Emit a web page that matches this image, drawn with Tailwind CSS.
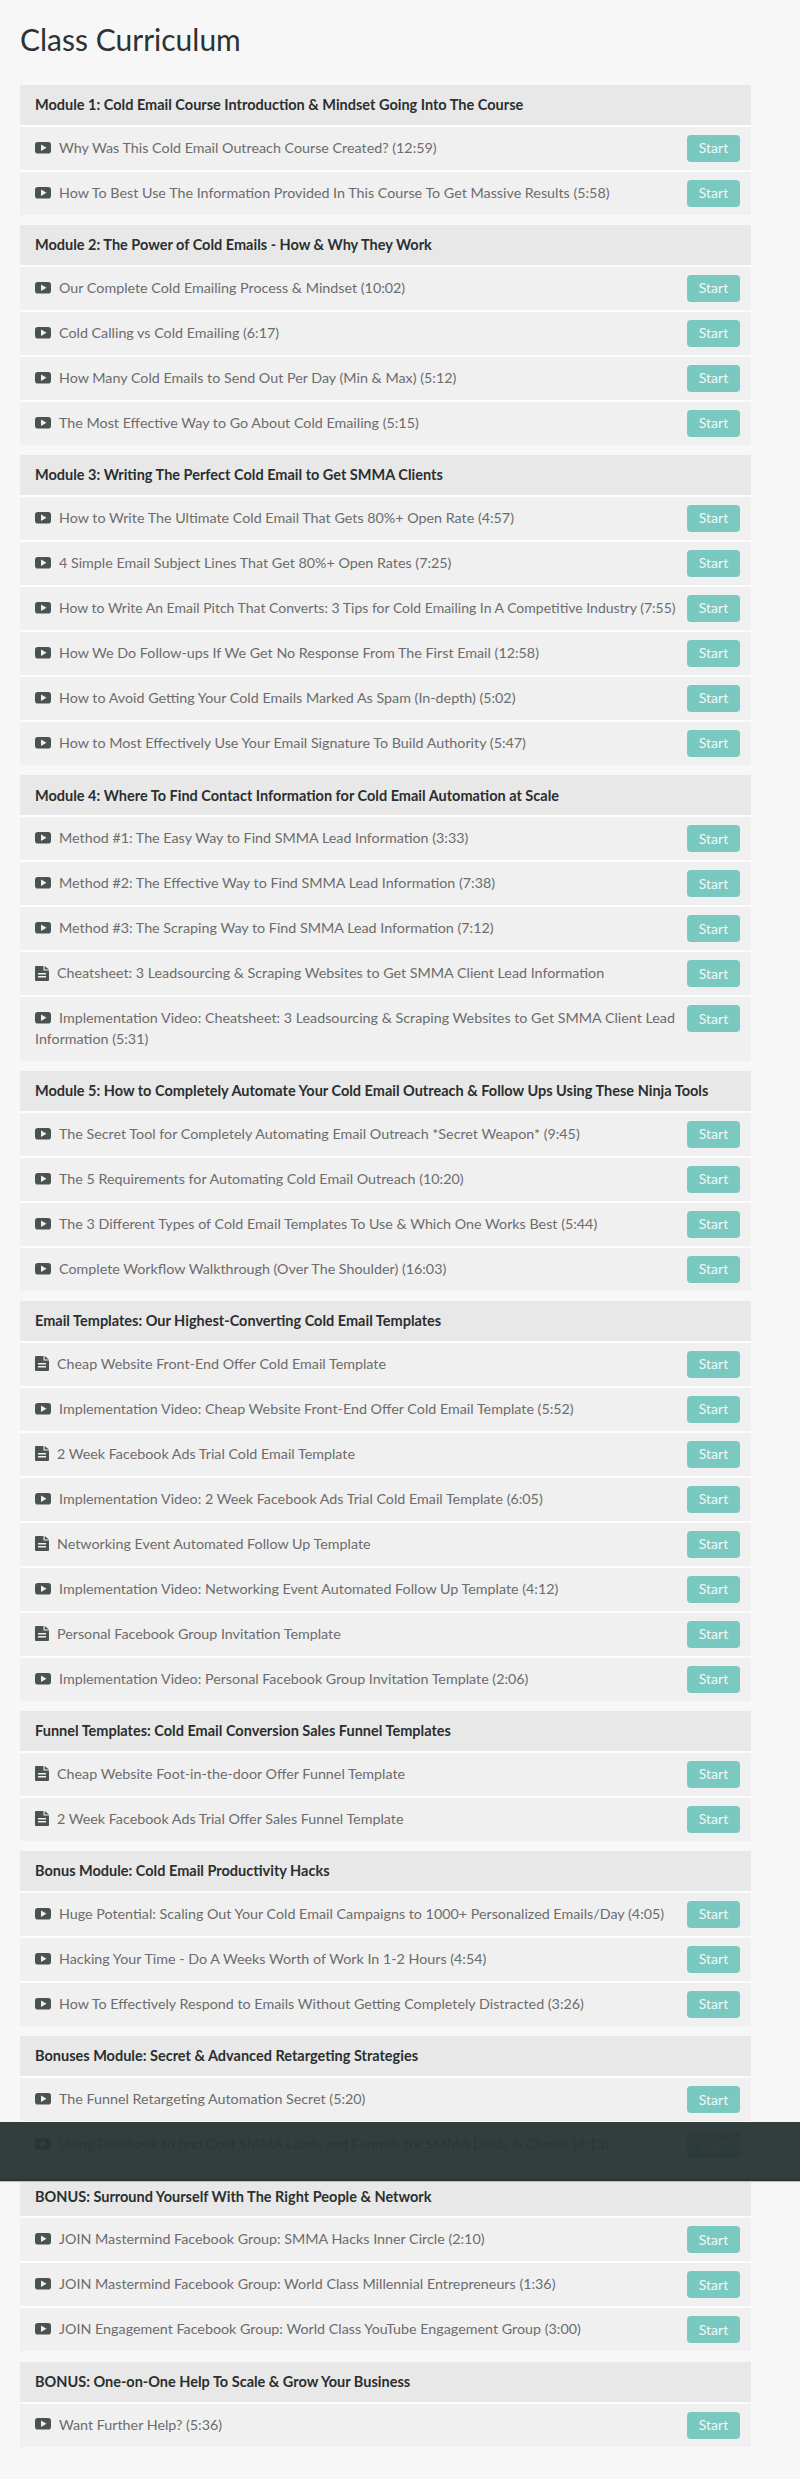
<!doctype html>
<html lang="en">
<head>
<meta charset="utf-8">
<title>Class Curriculum</title>
<script src="https://cdn.jsdelivr.net/npm/@tailwindcss/browser@4"></script>
</head>
<body class="relative h-[2479px] overflow-hidden bg-[#f7f7f7] font-['Lato',sans-serif] text-[#6c6c6c]">
<svg class="hidden">
  <symbol id="v" viewBox="0 0 16 12"><rect width="16" height="11.5" rx="2.8" fill="#4a5352"/><path d="M6 2.6 11.5 5.8 6 9Z" fill="#f0f0f0"/></symbol>
  <symbol id="d" viewBox="0 0 14 15"><path d="M0 1a1 1 0 0 1 1-1h7.5v4.5H14V14a1 1 0 0 1-1 1H1a1 1 0 0 1-1-1Z" fill="#4a5352"/><path d="M9.7 0 14 3.5H9.7Z" fill="#4a5352"/><path d="M3 7h8v1.4H3ZM3 10h8v1.4H3Z" fill="#f0f0f0"/></symbol>
</svg>
<main class="pt-[21px] pl-5 w-[751px]">
<h1 class="text-[30px] leading-[36px] font-normal text-[#2c3333] mb-[28px]">Class Curriculum</h1>

<section class="mb-[10.15px] bg-[#fcfcfc]">
<h2 class="h-[40px] mb-[2px] bg-[#e8e8e8] pl-[15px] flex items-center text-[14.5px] font-bold text-[#2b2f2f]">Module 1: Cold Email Course Introduction &amp; Mindset Going Into The Course</h2>
<div class="flex justify-between items-start mb-[2px] bg-[#f0f0f0] pl-[15px] pr-[11px] py-[11px] text-[14.3px] leading-[20.6px]"><p><svg class="inline w-4 h-3 mr-2 -mt-[3px]"><use href="#v"/></svg>Why Was This Cold Email Outreach Course Created? (12:59)</p><a class="shrink-0 -my-[3px] flex w-[53px] h-[27px] items-center justify-center rounded-[4px] bg-[#7ac9c0] text-[14px] text-[#f2f8f7]">Start</a></div>
<div class="flex justify-between items-start mb-[2px] bg-[#f0f0f0] pl-[15px] pr-[11px] py-[11px] text-[14.3px] leading-[20.6px]"><p><svg class="inline w-4 h-3 mr-2 -mt-[3px]"><use href="#v"/></svg>How To Best Use The Information Provided In This Course To Get Massive Results (5:58)</p><a class="shrink-0 -my-[3px] flex w-[53px] h-[27px] items-center justify-center rounded-[4px] bg-[#7ac9c0] text-[14px] text-[#f2f8f7]">Start</a></div>
</section>

<section class="mb-[10.15px] bg-[#fcfcfc]">
<h2 class="h-[40px] mb-[2px] bg-[#e8e8e8] pl-[15px] flex items-center text-[14.5px] font-bold text-[#2b2f2f]">Module 2: The Power of Cold Emails - How &amp; Why They Work</h2>
<div class="flex justify-between items-start mb-[2px] bg-[#f0f0f0] pl-[15px] pr-[11px] py-[11px] text-[14.3px] leading-[20.6px]"><p><svg class="inline w-4 h-3 mr-2 -mt-[3px]"><use href="#v"/></svg>Our Complete Cold Emailing Process &amp; Mindset (10:02)</p><a class="shrink-0 -my-[3px] flex w-[53px] h-[27px] items-center justify-center rounded-[4px] bg-[#7ac9c0] text-[14px] text-[#f2f8f7]">Start</a></div>
<div class="flex justify-between items-start mb-[2px] bg-[#f0f0f0] pl-[15px] pr-[11px] py-[11px] text-[14.3px] leading-[20.6px]"><p><svg class="inline w-4 h-3 mr-2 -mt-[3px]"><use href="#v"/></svg>Cold Calling vs Cold Emailing (6:17)</p><a class="shrink-0 -my-[3px] flex w-[53px] h-[27px] items-center justify-center rounded-[4px] bg-[#7ac9c0] text-[14px] text-[#f2f8f7]">Start</a></div>
<div class="flex justify-between items-start mb-[2px] bg-[#f0f0f0] pl-[15px] pr-[11px] py-[11px] text-[14.3px] leading-[20.6px]"><p><svg class="inline w-4 h-3 mr-2 -mt-[3px]"><use href="#v"/></svg>How Many Cold Emails to Send Out Per Day (Min &amp; Max) (5:12)</p><a class="shrink-0 -my-[3px] flex w-[53px] h-[27px] items-center justify-center rounded-[4px] bg-[#7ac9c0] text-[14px] text-[#f2f8f7]">Start</a></div>
<div class="flex justify-between items-start mb-[2px] bg-[#f0f0f0] pl-[15px] pr-[11px] py-[11px] text-[14.3px] leading-[20.6px]"><p><svg class="inline w-4 h-3 mr-2 -mt-[3px]"><use href="#v"/></svg>The Most Effective Way to Go About Cold Emailing (5:15)</p><a class="shrink-0 -my-[3px] flex w-[53px] h-[27px] items-center justify-center rounded-[4px] bg-[#7ac9c0] text-[14px] text-[#f2f8f7]">Start</a></div>
</section>

<section class="mb-[10.15px] bg-[#fcfcfc]">
<h2 class="h-[40px] mb-[2px] bg-[#e8e8e8] pl-[15px] flex items-center text-[14.5px] font-bold text-[#2b2f2f]">Module 3: Writing The Perfect Cold Email to Get SMMA Clients</h2>
<div class="flex justify-between items-start mb-[2px] bg-[#f0f0f0] pl-[15px] pr-[11px] py-[11px] text-[14.3px] leading-[20.6px]"><p><svg class="inline w-4 h-3 mr-2 -mt-[3px]"><use href="#v"/></svg>How to Write The Ultimate Cold Email That Gets 80%+ Open Rate (4:57)</p><a class="shrink-0 -my-[3px] flex w-[53px] h-[27px] items-center justify-center rounded-[4px] bg-[#7ac9c0] text-[14px] text-[#f2f8f7]">Start</a></div>
<div class="flex justify-between items-start mb-[2px] bg-[#f0f0f0] pl-[15px] pr-[11px] py-[11px] text-[14.3px] leading-[20.6px]"><p><svg class="inline w-4 h-3 mr-2 -mt-[3px]"><use href="#v"/></svg>4 Simple Email Subject Lines That Get 80%+ Open Rates (7:25)</p><a class="shrink-0 -my-[3px] flex w-[53px] h-[27px] items-center justify-center rounded-[4px] bg-[#7ac9c0] text-[14px] text-[#f2f8f7]">Start</a></div>
<div class="flex justify-between items-start mb-[2px] bg-[#f0f0f0] pl-[15px] pr-[11px] py-[11px] text-[14px] leading-[20.6px]"><p class="whitespace-nowrap"><svg class="inline w-4 h-3 mr-2 -mt-[3px]"><use href="#v"/></svg>How to Write An Email Pitch That Converts: 3 Tips for Cold Emailing In A Competitive Industry (7:55)</p><a class="shrink-0 -my-[3px] flex w-[53px] h-[27px] items-center justify-center rounded-[4px] bg-[#7ac9c0] text-[14px] text-[#f2f8f7]">Start</a></div>
<div class="flex justify-between items-start mb-[2px] bg-[#f0f0f0] pl-[15px] pr-[11px] py-[11px] text-[14.3px] leading-[20.6px]"><p><svg class="inline w-4 h-3 mr-2 -mt-[3px]"><use href="#v"/></svg>How We Do Follow-ups If We Get No Response From The First Email (12:58)</p><a class="shrink-0 -my-[3px] flex w-[53px] h-[27px] items-center justify-center rounded-[4px] bg-[#7ac9c0] text-[14px] text-[#f2f8f7]">Start</a></div>
<div class="flex justify-between items-start mb-[2px] bg-[#f0f0f0] pl-[15px] pr-[11px] py-[11px] text-[14.3px] leading-[20.6px]"><p><svg class="inline w-4 h-3 mr-2 -mt-[3px]"><use href="#v"/></svg>How to Avoid Getting Your Cold Emails Marked As Spam (In-depth) (5:02)</p><a class="shrink-0 -my-[3px] flex w-[53px] h-[27px] items-center justify-center rounded-[4px] bg-[#7ac9c0] text-[14px] text-[#f2f8f7]">Start</a></div>
<div class="flex justify-between items-start mb-[2px] bg-[#f0f0f0] pl-[15px] pr-[11px] py-[11px] text-[14.3px] leading-[20.6px]"><p><svg class="inline w-4 h-3 mr-2 -mt-[3px]"><use href="#v"/></svg>How to Most Effectively Use Your Email Signature To Build Authority (5:47)</p><a class="shrink-0 -my-[3px] flex w-[53px] h-[27px] items-center justify-center rounded-[4px] bg-[#7ac9c0] text-[14px] text-[#f2f8f7]">Start</a></div>
</section>

<section class="mb-[10.15px] bg-[#fcfcfc]">
<h2 class="h-[40px] mb-[2px] bg-[#e8e8e8] pl-[15px] flex items-center text-[14.5px] font-bold text-[#2b2f2f]">Module 4: Where To Find Contact Information for Cold Email Automation at Scale</h2>
<div class="flex justify-between items-start mb-[2px] bg-[#f0f0f0] pl-[15px] pr-[11px] py-[11px] text-[14.3px] leading-[20.6px]"><p><svg class="inline w-4 h-3 mr-2 -mt-[3px]"><use href="#v"/></svg>Method #1: The Easy Way to Find SMMA Lead Information (3:33)</p><a class="shrink-0 -my-[3px] flex w-[53px] h-[27px] items-center justify-center rounded-[4px] bg-[#7ac9c0] text-[14px] text-[#f2f8f7]">Start</a></div>
<div class="flex justify-between items-start mb-[2px] bg-[#f0f0f0] pl-[15px] pr-[11px] py-[11px] text-[14.3px] leading-[20.6px]"><p><svg class="inline w-4 h-3 mr-2 -mt-[3px]"><use href="#v"/></svg>Method #2: The Effective Way to Find SMMA Lead Information (7:38)</p><a class="shrink-0 -my-[3px] flex w-[53px] h-[27px] items-center justify-center rounded-[4px] bg-[#7ac9c0] text-[14px] text-[#f2f8f7]">Start</a></div>
<div class="flex justify-between items-start mb-[2px] bg-[#f0f0f0] pl-[15px] pr-[11px] py-[11px] text-[14.3px] leading-[20.6px]"><p><svg class="inline w-4 h-3 mr-2 -mt-[3px]"><use href="#v"/></svg>Method #3: The Scraping Way to Find SMMA Lead Information (7:12)</p><a class="shrink-0 -my-[3px] flex w-[53px] h-[27px] items-center justify-center rounded-[4px] bg-[#7ac9c0] text-[14px] text-[#f2f8f7]">Start</a></div>
<div class="flex justify-between items-start mb-[2px] bg-[#f0f0f0] pl-[15px] pr-[11px] py-[11px] text-[14.3px] leading-[20.6px]"><p><svg class="inline w-[14px] h-[15px] mr-2 -mt-[3px]"><use href="#d"/></svg>Cheatsheet: 3 Leadsourcing &amp; Scraping Websites to Get SMMA Client Lead Information</p><a class="shrink-0 -my-[3px] flex w-[53px] h-[27px] items-center justify-center rounded-[4px] bg-[#7ac9c0] text-[14px] text-[#f2f8f7]">Start</a></div>
<div class="flex justify-between items-start mb-[2px] bg-[#f0f0f0] pl-[15px] pr-[11px] py-[11px] text-[14.3px] leading-[20.6px]"><p><svg class="inline w-4 h-3 mr-2 -mt-[3px]"><use href="#v"/></svg>Implementation Video: Cheatsheet: 3 Leadsourcing &amp; Scraping Websites to Get SMMA Client Lead Information (5:31)</p><a class="shrink-0 -my-[3px] flex w-[53px] h-[27px] items-center justify-center rounded-[4px] bg-[#7ac9c0] text-[14px] text-[#f2f8f7]">Start</a></div>
</section>

<section class="mb-[10.15px] bg-[#fcfcfc]">
<h2 class="h-[40px] mb-[2px] bg-[#e8e8e8] pl-[15px] flex items-center text-[14.5px] font-bold text-[#2b2f2f]">Module 5: How to Completely Automate Your Cold Email Outreach &amp; Follow Ups Using These Ninja Tools</h2>
<div class="flex justify-between items-start mb-[2px] bg-[#f0f0f0] pl-[15px] pr-[11px] py-[11px] text-[14.3px] leading-[20.6px]"><p><svg class="inline w-4 h-3 mr-2 -mt-[3px]"><use href="#v"/></svg>The Secret Tool for Completely Automating Email Outreach *Secret Weapon* (9:45)</p><a class="shrink-0 -my-[3px] flex w-[53px] h-[27px] items-center justify-center rounded-[4px] bg-[#7ac9c0] text-[14px] text-[#f2f8f7]">Start</a></div>
<div class="flex justify-between items-start mb-[2px] bg-[#f0f0f0] pl-[15px] pr-[11px] py-[11px] text-[14.3px] leading-[20.6px]"><p><svg class="inline w-4 h-3 mr-2 -mt-[3px]"><use href="#v"/></svg>The 5 Requirements for Automating Cold Email Outreach (10:20)</p><a class="shrink-0 -my-[3px] flex w-[53px] h-[27px] items-center justify-center rounded-[4px] bg-[#7ac9c0] text-[14px] text-[#f2f8f7]">Start</a></div>
<div class="flex justify-between items-start mb-[2px] bg-[#f0f0f0] pl-[15px] pr-[11px] py-[11px] text-[14.3px] leading-[20.6px]"><p><svg class="inline w-4 h-3 mr-2 -mt-[3px]"><use href="#v"/></svg>The 3 Different Types of Cold Email Templates To Use &amp; Which One Works Best (5:44)</p><a class="shrink-0 -my-[3px] flex w-[53px] h-[27px] items-center justify-center rounded-[4px] bg-[#7ac9c0] text-[14px] text-[#f2f8f7]">Start</a></div>
<div class="flex justify-between items-start mb-[2px] bg-[#f0f0f0] pl-[15px] pr-[11px] py-[11px] text-[14.3px] leading-[20.6px]"><p><svg class="inline w-4 h-3 mr-2 -mt-[3px]"><use href="#v"/></svg>Complete Workflow Walkthrough (Over The Shoulder) (16:03)</p><a class="shrink-0 -my-[3px] flex w-[53px] h-[27px] items-center justify-center rounded-[4px] bg-[#7ac9c0] text-[14px] text-[#f2f8f7]">Start</a></div>
</section>

<section class="mb-[10.15px] bg-[#fcfcfc]">
<h2 class="h-[40px] mb-[2px] bg-[#e8e8e8] pl-[15px] flex items-center text-[14.5px] font-bold text-[#2b2f2f]">Email Templates: Our Highest-Converting Cold Email Templates</h2>
<div class="flex justify-between items-start mb-[2px] bg-[#f0f0f0] pl-[15px] pr-[11px] py-[11px] text-[14.3px] leading-[20.6px]"><p><svg class="inline w-[14px] h-[15px] mr-2 -mt-[3px]"><use href="#d"/></svg>Cheap Website Front-End Offer Cold Email Template</p><a class="shrink-0 -my-[3px] flex w-[53px] h-[27px] items-center justify-center rounded-[4px] bg-[#7ac9c0] text-[14px] text-[#f2f8f7]">Start</a></div>
<div class="flex justify-between items-start mb-[2px] bg-[#f0f0f0] pl-[15px] pr-[11px] py-[11px] text-[14.3px] leading-[20.6px]"><p><svg class="inline w-4 h-3 mr-2 -mt-[3px]"><use href="#v"/></svg>Implementation Video: Cheap Website Front-End Offer Cold Email Template (5:52)</p><a class="shrink-0 -my-[3px] flex w-[53px] h-[27px] items-center justify-center rounded-[4px] bg-[#7ac9c0] text-[14px] text-[#f2f8f7]">Start</a></div>
<div class="flex justify-between items-start mb-[2px] bg-[#f0f0f0] pl-[15px] pr-[11px] py-[11px] text-[14.3px] leading-[20.6px]"><p><svg class="inline w-[14px] h-[15px] mr-2 -mt-[3px]"><use href="#d"/></svg>2 Week Facebook Ads Trial Cold Email Template</p><a class="shrink-0 -my-[3px] flex w-[53px] h-[27px] items-center justify-center rounded-[4px] bg-[#7ac9c0] text-[14px] text-[#f2f8f7]">Start</a></div>
<div class="flex justify-between items-start mb-[2px] bg-[#f0f0f0] pl-[15px] pr-[11px] py-[11px] text-[14.3px] leading-[20.6px]"><p><svg class="inline w-4 h-3 mr-2 -mt-[3px]"><use href="#v"/></svg>Implementation Video: 2 Week Facebook Ads Trial Cold Email Template (6:05)</p><a class="shrink-0 -my-[3px] flex w-[53px] h-[27px] items-center justify-center rounded-[4px] bg-[#7ac9c0] text-[14px] text-[#f2f8f7]">Start</a></div>
<div class="flex justify-between items-start mb-[2px] bg-[#f0f0f0] pl-[15px] pr-[11px] py-[11px] text-[14.3px] leading-[20.6px]"><p><svg class="inline w-[14px] h-[15px] mr-2 -mt-[3px]"><use href="#d"/></svg>Networking Event Automated Follow Up Template</p><a class="shrink-0 -my-[3px] flex w-[53px] h-[27px] items-center justify-center rounded-[4px] bg-[#7ac9c0] text-[14px] text-[#f2f8f7]">Start</a></div>
<div class="flex justify-between items-start mb-[2px] bg-[#f0f0f0] pl-[15px] pr-[11px] py-[11px] text-[14.3px] leading-[20.6px]"><p><svg class="inline w-4 h-3 mr-2 -mt-[3px]"><use href="#v"/></svg>Implementation Video: Networking Event Automated Follow Up Template (4:12)</p><a class="shrink-0 -my-[3px] flex w-[53px] h-[27px] items-center justify-center rounded-[4px] bg-[#7ac9c0] text-[14px] text-[#f2f8f7]">Start</a></div>
<div class="flex justify-between items-start mb-[2px] bg-[#f0f0f0] pl-[15px] pr-[11px] py-[11px] text-[14.3px] leading-[20.6px]"><p><svg class="inline w-[14px] h-[15px] mr-2 -mt-[3px]"><use href="#d"/></svg>Personal Facebook Group Invitation Template</p><a class="shrink-0 -my-[3px] flex w-[53px] h-[27px] items-center justify-center rounded-[4px] bg-[#7ac9c0] text-[14px] text-[#f2f8f7]">Start</a></div>
<div class="flex justify-between items-start mb-[2px] bg-[#f0f0f0] pl-[15px] pr-[11px] py-[11px] text-[14.3px] leading-[20.6px]"><p><svg class="inline w-4 h-3 mr-2 -mt-[3px]"><use href="#v"/></svg>Implementation Video: Personal Facebook Group Invitation Template (2:06)</p><a class="shrink-0 -my-[3px] flex w-[53px] h-[27px] items-center justify-center rounded-[4px] bg-[#7ac9c0] text-[14px] text-[#f2f8f7]">Start</a></div>
</section>

<section class="mb-[10.15px] bg-[#fcfcfc]">
<h2 class="h-[40px] mb-[2px] bg-[#e8e8e8] pl-[15px] flex items-center text-[14.5px] font-bold text-[#2b2f2f]">Funnel Templates: Cold Email Conversion Sales Funnel Templates</h2>
<div class="flex justify-between items-start mb-[2px] bg-[#f0f0f0] pl-[15px] pr-[11px] py-[11px] text-[14.3px] leading-[20.6px]"><p><svg class="inline w-[14px] h-[15px] mr-2 -mt-[3px]"><use href="#d"/></svg>Cheap Website Foot-in-the-door Offer Funnel Template</p><a class="shrink-0 -my-[3px] flex w-[53px] h-[27px] items-center justify-center rounded-[4px] bg-[#7ac9c0] text-[14px] text-[#f2f8f7]">Start</a></div>
<div class="flex justify-between items-start mb-[2px] bg-[#f0f0f0] pl-[15px] pr-[11px] py-[11px] text-[14.3px] leading-[20.6px]"><p><svg class="inline w-[14px] h-[15px] mr-2 -mt-[3px]"><use href="#d"/></svg>2 Week Facebook Ads Trial Offer Sales Funnel Template</p><a class="shrink-0 -my-[3px] flex w-[53px] h-[27px] items-center justify-center rounded-[4px] bg-[#7ac9c0] text-[14px] text-[#f2f8f7]">Start</a></div>
</section>

<section class="mb-[10.15px] bg-[#fcfcfc]">
<h2 class="h-[40px] mb-[2px] bg-[#e8e8e8] pl-[15px] flex items-center text-[14.5px] font-bold text-[#2b2f2f]">Bonus Module: Cold Email Productivity Hacks</h2>
<div class="flex justify-between items-start mb-[2px] bg-[#f0f0f0] pl-[15px] pr-[11px] py-[11px] text-[14.3px] leading-[20.6px]"><p><svg class="inline w-4 h-3 mr-2 -mt-[3px]"><use href="#v"/></svg>Huge Potential: Scaling Out Your Cold Email Campaigns to 1000+ Personalized Emails/Day (4:05)</p><a class="shrink-0 -my-[3px] flex w-[53px] h-[27px] items-center justify-center rounded-[4px] bg-[#7ac9c0] text-[14px] text-[#f2f8f7]">Start</a></div>
<div class="flex justify-between items-start mb-[2px] bg-[#f0f0f0] pl-[15px] pr-[11px] py-[11px] text-[14.3px] leading-[20.6px]"><p><svg class="inline w-4 h-3 mr-2 -mt-[3px]"><use href="#v"/></svg>Hacking Your Time - Do A Weeks Worth of Work In 1-2 Hours (4:54)</p><a class="shrink-0 -my-[3px] flex w-[53px] h-[27px] items-center justify-center rounded-[4px] bg-[#7ac9c0] text-[14px] text-[#f2f8f7]">Start</a></div>
<div class="flex justify-between items-start mb-[2px] bg-[#f0f0f0] pl-[15px] pr-[11px] py-[11px] text-[14.3px] leading-[20.6px]"><p><svg class="inline w-4 h-3 mr-2 -mt-[3px]"><use href="#v"/></svg>How To Effectively Respond to Emails Without Getting Completely Distracted (3:26)</p><a class="shrink-0 -my-[3px] flex w-[53px] h-[27px] items-center justify-center rounded-[4px] bg-[#7ac9c0] text-[14px] text-[#f2f8f7]">Start</a></div>
</section>

<section class="mb-[10.15px] bg-[#fcfcfc]">
<h2 class="h-[40px] mb-[2px] bg-[#e8e8e8] pl-[15px] flex items-center text-[14.5px] font-bold text-[#2b2f2f]">Bonuses Module: Secret &amp; Advanced Retargeting Strategies</h2>
<div class="flex justify-between items-start mb-[2px] bg-[#f0f0f0] pl-[15px] pr-[11px] py-[11px] text-[14.3px] leading-[20.6px]"><p><svg class="inline w-4 h-3 mr-2 -mt-[3px]"><use href="#v"/></svg>The Funnel Retargeting Automation Secret (5:20)</p><a class="shrink-0 -my-[3px] flex w-[53px] h-[27px] items-center justify-center rounded-[4px] bg-[#7ac9c0] text-[14px] text-[#f2f8f7]">Start</a></div>
<div class="flex justify-between items-start mb-[2px] bg-[#f0f0f0] pl-[15px] pr-[11px] py-[11px] text-[14.3px] leading-[20.6px]"><p><svg class="inline w-4 h-3 mr-2 -mt-[3px]"><use href="#v"/></svg>Using Facebook to find Cold SMMA Leads and Funnels for SMMA Leads &amp; Clients (4:13)</p><a class="shrink-0 -my-[3px] flex w-[53px] h-[27px] items-center justify-center rounded-[4px] bg-[#7ac9c0] text-[14px] text-[#f2f8f7]">Start</a></div>
</section>

<section class="mb-[10.15px] bg-[#fcfcfc]">
<h2 class="h-[40px] mb-[2px] bg-[#e8e8e8] pl-[15px] flex items-center text-[14.5px] font-bold text-[#2b2f2f]">BONUS: Surround Yourself With The Right People &amp; Network</h2>
<div class="flex justify-between items-start mb-[2px] bg-[#f0f0f0] pl-[15px] pr-[11px] py-[11px] text-[14.3px] leading-[20.6px]"><p><svg class="inline w-4 h-3 mr-2 -mt-[3px]"><use href="#v"/></svg>JOIN Mastermind Facebook Group: SMMA Hacks Inner Circle (2:10)</p><a class="shrink-0 -my-[3px] flex w-[53px] h-[27px] items-center justify-center rounded-[4px] bg-[#7ac9c0] text-[14px] text-[#f2f8f7]">Start</a></div>
<div class="flex justify-between items-start mb-[2px] bg-[#f0f0f0] pl-[15px] pr-[11px] py-[11px] text-[14.3px] leading-[20.6px]"><p><svg class="inline w-4 h-3 mr-2 -mt-[3px]"><use href="#v"/></svg>JOIN Mastermind Facebook Group: World Class Millennial Entrepreneurs (1:36)</p><a class="shrink-0 -my-[3px] flex w-[53px] h-[27px] items-center justify-center rounded-[4px] bg-[#7ac9c0] text-[14px] text-[#f2f8f7]">Start</a></div>
<div class="flex justify-between items-start mb-[2px] bg-[#f0f0f0] pl-[15px] pr-[11px] py-[11px] text-[14.3px] leading-[20.6px]"><p><svg class="inline w-4 h-3 mr-2 -mt-[3px]"><use href="#v"/></svg>JOIN Engagement Facebook Group: World Class YouTube Engagement Group (3:00)</p><a class="shrink-0 -my-[3px] flex w-[53px] h-[27px] items-center justify-center rounded-[4px] bg-[#7ac9c0] text-[14px] text-[#f2f8f7]">Start</a></div>
</section>

<section class="mb-[10.15px] bg-[#fcfcfc]">
<h2 class="h-[40px] mb-[2px] bg-[#e8e8e8] pl-[15px] flex items-center text-[14.5px] font-bold text-[#2b2f2f]">BONUS: One-on-One Help To Scale &amp; Grow Your Business</h2>
<div class="flex justify-between items-start mb-[2px] bg-[#f0f0f0] pl-[15px] pr-[11px] py-[11px] text-[14.3px] leading-[20.6px]"><p><svg class="inline w-4 h-3 mr-2 -mt-[3px]"><use href="#v"/></svg>Want Further Help? (5:36)</p><a class="shrink-0 -my-[3px] flex w-[53px] h-[27px] items-center justify-center rounded-[4px] bg-[#7ac9c0] text-[14px] text-[#f2f8f7]">Start</a></div>
</section>
</main>
<div class="absolute inset-x-0 top-[2122px] h-[59px] border-b-2 border-[#2b3535] bg-[#283333]/95 shadow-[0_1px_0_#bbb]"></div>
</body>
</html>
